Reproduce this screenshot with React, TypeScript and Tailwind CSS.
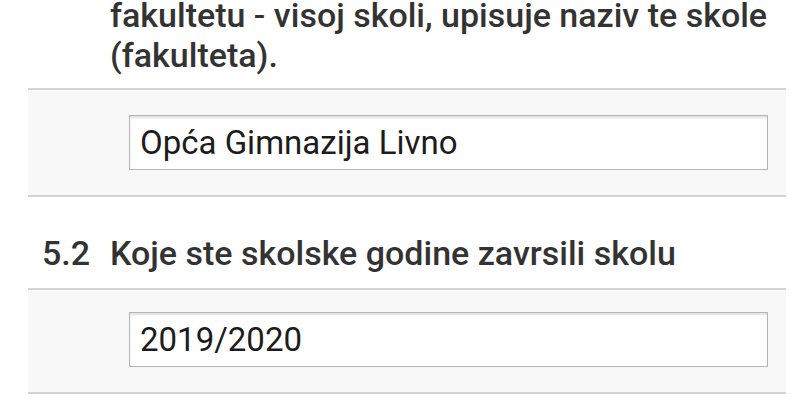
export default function App() {
  return (
    <div className="w-[800px] h-[420px] overflow-hidden bg-white font-['Roboto',sans-serif]">
      {/* question 5.1 (tail of the label) */}
      <div className="mt-[-5px] pl-[110px] pr-[10px] text-[34px] leading-[40px] font-medium text-[#333]">
        fakultetu - visoj skoli, upisuje naziv te skole (fakulteta).
      </div>
      <div className="mt-[13px] ml-[28px] w-[758px] border-y-2 border-[#d4d4d4] bg-[#f8f8f8] pt-[25px] pb-[25px] pl-[101px] pr-[18px]">
        <div className="h-[55px] flex items-center pl-[10px] border border-[#b5b5b5] bg-white shadow-[inset_0_2px_2px_rgba(0,0,0,0.12)] text-[33px] text-[#1c1c1c]">
          Opća Gimnazija Livno
        </div>
      </div>

      {/* question 5.2 */}
      <div className="mt-[36px] flex text-[34px] leading-[40px] font-medium text-[#333]">
        <span className="w-[110px] pl-[42px]">5.2</span>
        <span>Koje ste skolske godine zavrsili skolu</span>
      </div>
      <div className="mt-[15px] ml-[28px] w-[758px] border-y-2 border-[#d4d4d4] bg-[#f8f8f8] pt-[22px] pb-[25px] pl-[101px] pr-[18px]">
        <div className="h-[55px] flex items-center pl-[10px] border border-[#b5b5b5] bg-white shadow-[inset_0_2px_2px_rgba(0,0,0,0.12)] text-[33px] text-[#1c1c1c]">
          2019/2020
        </div>
      </div>
    </div>
  );
}
